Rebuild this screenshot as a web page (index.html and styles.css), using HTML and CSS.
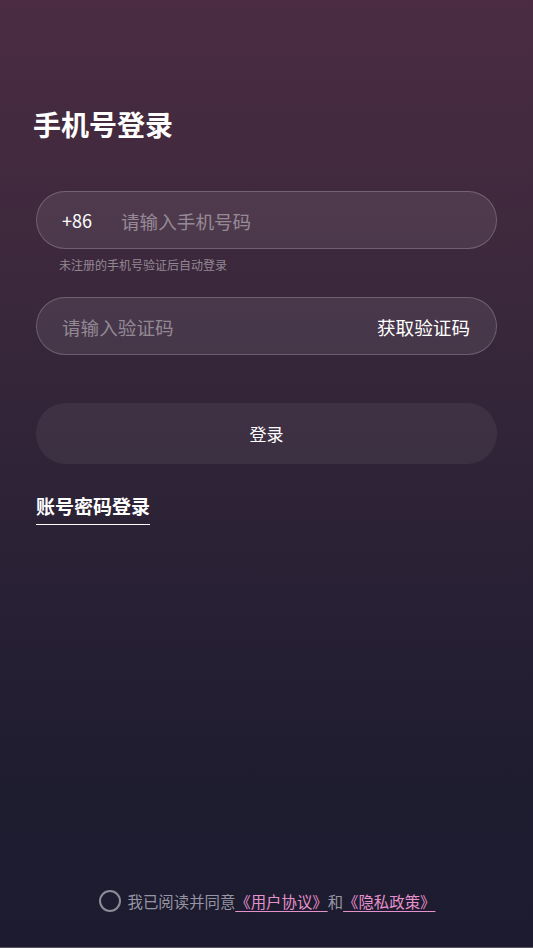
FILE: index.html
```html
<!DOCTYPE html>
<html lang="zh-CN">
<head>
  <meta charset="UTF-8">
  <meta name="viewport" content="width=device-width, initial-scale=1.0">
  <title>手机号登录</title>
  <link rel="stylesheet" href="styles.css">
</head>
<body>

<div class="page">
  <h1 class="title">手机号登录</h1>

  <div class="field">
    <span class="prefix">+86</span>
    <input class="field-input" type="tel" placeholder="请输入手机号码">
  </div>
  <p class="hint">未注册的手机号验证后自动登录</p>

  <div class="field field-code">
    <input class="field-input" type="text" placeholder="请输入验证码">
    <button class="get-code">获取验证码</button>
  </div>

  <button class="login-btn">登录</button>

  <div class="switch-row">
    <a class="switch-link">账号密码登录</a>
  </div>

  <div class="spacer"></div>

  <div class="agree">
    <span class="check"></span>
    <span class="agree-text">我已阅读并同意<a class="doc-link">《用户协议》</a>和<a class="doc-link">《隐私政策》</a></span>
  </div>
</div>

</body>
</html>
```

FILE: styles.css
```css
body, html {
  margin: 0;
  padding: 0;
  height: 100%;
  overflow: hidden;
  font-family: "Noto Sans CJK SC", "Noto Sans", sans-serif;
}

.page {
  box-sizing: border-box;
  height: 948px;
  padding: 0 36px 0 36px;
  display: flex;
  flex-direction: column;
  background: linear-gradient(180deg, #4b2c42 0%, #3b283c 30%, #2c2236 55%, #1e1c2f 85%, #1d1b2f 100%);
  border-bottom: 1px solid #55535e;
}

.title {
  margin: 104px 0 0 -3px;
  font-size: 28px;
  font-weight: 700;
  line-height: 40px;
  color: #fff;
}

.field {
  margin-top: 47px;
  height: 58px;
  box-sizing: border-box;
  border: 1px solid rgba(255, 255, 255, 0.2);
  border-radius: 29px;
  background-color: rgba(255, 255, 255, 0.08);
  display: flex;
  align-items: center;
  padding: 0 26px 0 25px;
}

.prefix {
  color: #fff;
  font-size: 18px;
  width: 59px;
  flex-shrink: 0;
}

.field-input {
  flex: 1;
  min-width: 0;
  background: transparent;
  border: none;
  outline: none;
  color: #fff;
  font-family: inherit;
  font-size: 18.6px;
  padding: 0;
}

.field-input::placeholder {
  color: rgba(255, 255, 255, 0.42);
}

.hint {
  margin: 7px 0 0 23px;
  font-size: 12px;
  line-height: 18px;
  color: rgba(255, 255, 255, 0.45);
}

.field-code {
  margin-top: 23px;
}

.get-code {
  background: none;
  border: none;
  padding: 0;
  color: #fff;
  font-family: inherit;
  font-size: 18.6px;
  cursor: pointer;
}

.login-btn {
  margin-top: 48px;
  height: 61px;
  border: none;
  border-radius: 30px;
  background-color: rgba(255, 255, 255, 0.06);
  color: #fff;
  font-family: inherit;
  font-size: 17px;
  cursor: pointer;
}

.switch-row {
  margin-top: 28px;
  display: flex;
}

.switch-link {
  color: #fff;
  font-size: 19px;
  font-weight: 700;
  line-height: 28px;
  padding-bottom: 4px;
  border-bottom: 1px solid #fff;
  cursor: pointer;
}

.spacer {
  flex: 1;
}

.agree {
  margin-bottom: 35px;
  display: flex;
  align-items: center;
  justify-content: center;
  gap: 7px;
  padding-left: 1px;
}

.check {
  width: 18px;
  height: 18px;
  border: 2px solid #8d8b98;
  border-radius: 50%;
}

.agree-text {
  color: #9795a3;
  font-size: 15.4px;
  line-height: 22px;
}

.doc-link {
  color: #e592cc;
  text-decoration: underline;
  text-underline-offset: 3px;
  cursor: pointer;
}
```
